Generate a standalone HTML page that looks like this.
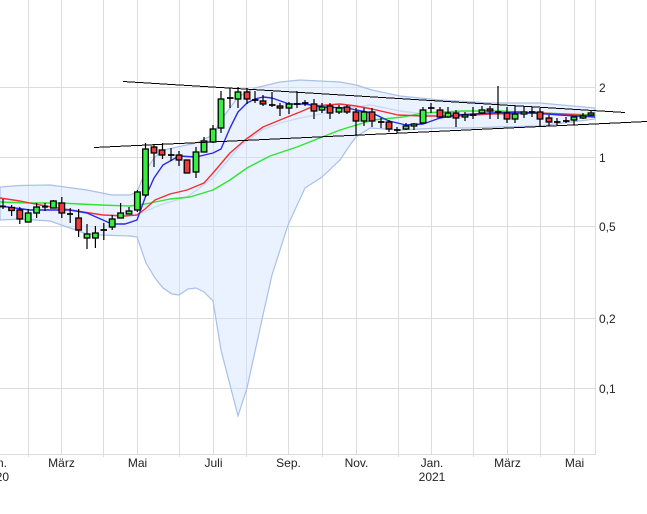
<!DOCTYPE html>
<html lang="de">
<head>
<meta charset="utf-8">
<title>Chart</title>
<style>
html,body{margin:0;padding:0;background:#fff;width:647px;height:514px;overflow:hidden}
svg{display:block}
text{font-family:"Liberation Sans",sans-serif;font-size:12px;fill:#222}
.grid{stroke:#dcdcdc;stroke-width:1;fill:none;shape-rendering:crispEdges}
.trend{stroke:#000;stroke-width:1;fill:none;shape-rendering:crispEdges}
.ma{fill:none;stroke-width:1.4;stroke-linejoin:round}
.c rect{stroke:#000;stroke-width:1.3}
.g rect{fill:#36ee40}
.r rect{fill:#ee3a3a}
.d{fill:none;stroke:#000;stroke-width:1.8}
</style>
</head>
<body>
<svg width="647" height="514" viewBox="0 0 647 514" xmlns="http://www.w3.org/2000/svg">
<path class="grid" d="M28.5 0V457M61.5 0V455M103.5 0V457M137.5 0V455M179.5 0V457M213.5 0V455M246.5 0V457M288.5 0V455M322.5 0V457M356.5 0V455M398.5 0V457M431.5 0V455M473.5 0V457M507.5 0V455M540.5 0V457M574.5 0V455M595.5 0V455M0 87.5H595M0 157.5H595M0 226.5H595M0 318.5H595M0 388.5H595M0 454.5H595"/>
<path d="M0 187L20 185.5L50 185L87 190L112 195L130 195L137 192L145 172L154 158L163 150L196 143L213 135L221 120L238 97L255 88L280 82L300 80L340 82L356 85L372 90L400 96L440 100L490 103L540 103L595 108L595 119L540 126L500 127L470 128L440 128L400 130L370 128L356 137L350 145L340 160L322 177L305 188L288 225L272 275L263 315L247 388L238 416L221 350L213 301L204 292L196 288L188 289L179 295L172 294L163 288L155 278L146 263L137 237L130 236L100 235L87 234L50 221L20 219L0 220Z" fill="#d0e0ff" fill-opacity=".45" stroke="#a9c0ea" stroke-width="1.2"/>
<polyline class="ma" stroke="#c8daf7" points="137,215 160,205 187,197 213,178 240,146 262,130 280,123 300,118 340,110 370,105 400,111 440,116 490,114 540,113 595,116"/>
<polyline class="ma" stroke="#2ee62e" points="0,202 30,203 60,203 100,205 130,206 145,204 170,199 190,197 213,190 230,180 247,168 270,156 297,147 340,130 373,120 403,117 423,113 463,111 500,111 540,113 595,115"/>
<polyline class="ma" stroke="#f03030" points="0,198 20,201 40,205 70,210 103,215 125,216 137,215 145,209 155,200 170,194 187,190 204,183 213,173 230,153 245,140 263,127 280,120 300,112 314,106 340,104 356,106 372,109 398,115 423,116 456,116 490,114 540,113 595,116"/>
<polyline class="ma" stroke="#2a2ae8" points="0,206 30,210 70,210 87,213 112,224 125,224 137,220 145,198 154,178 163,165 179,156 196,157 213,153 221,149 230,128 238,112 247,103 255,99 263,97 272,98 289,104 305,104 322,107 347,108 356,110 372,113 389,121 406,125 423,124 440,118 456,115 490,113 520,112 560,115 595,117"/>
<path stroke="#000" stroke-width="1.2" fill="none" d="M3 199V209M11.6 205V216M19.8 207V224M28.2 209V222M36.6 203V218M45 203V211M53.4 200V208M61.8 197V218M70.2 208V223M78.6 209V237M87 224V249M95.4 226V248M103.8 223V240M112.2 215V230M120.6 203V218M129 207V214M137.4 190V212M145.5 143V197M154 144V167M162.5 143V159M171 148V161M179 151V166M196 147V178M204 137V152M213 125V143M221 91V133M230 88V108M238 87V108M247 88V104M255 91V103M263 95V106M272 92V107M280 103V116M289 102V114M297 91V108M305 100V106M314 99V119M322 103V113M330 103V119M339 105V114M347 105V114M356 108V136M364 108V126M372 108V127M381 118V128M389 120V132M397 127V133M406 123V130M414 123V130M423 107V123M431 103V113M440 107V118M448 107V118M456 110V127M465 112V121M473 107V119M482 106V114M490 106V119M498 86V119M507 107V123M515 106V123M524 106V118M532 107V117M540 108V126M549 115V126M557 118V125M566 117V123M574 117V125M583 113V119M591 111V116"/>
<path class="d" d="M0 206.5H6M42 206.7H48M67 214H73M100.5 230H107M168 155H174.5M227 98H233.5M252 100H258.5M269 105H275.5M294 104H300.5M302 103H308.5M378 122H384.5M394 130H400.5M428 108H434.5M470 115H476.5M495 112H501.5M529 112H535.5M554 122H560.5M563 121H569.5"/>
<g class="c g">
<rect x="25.4" y="213" width="5.6" height="9"/>
<rect x="33.8" y="207" width="5.6" height="6"/>
<rect x="50.6" y="201" width="5.6" height="7"/>
<rect x="84.2" y="234" width="5.6" height="4"/>
<rect x="92.6" y="233" width="5.6" height="5"/>
<rect x="109.4" y="219" width="5.6" height="8"/>
<rect x="117.8" y="213" width="5.6" height="5"/>
<rect x="126.2" y="211" width="5.6" height="3"/>
<rect x="134.6" y="192" width="5.6" height="18"/>
<rect x="142.7" y="149" width="5.6" height="46"/>
<rect x="193.2" y="152" width="5.6" height="20"/>
<rect x="201.2" y="141" width="5.6" height="11"/>
<rect x="210.2" y="129" width="5.6" height="13"/>
<rect x="218.2" y="99" width="5.6" height="29"/>
<rect x="235.2" y="92" width="5.6" height="7"/>
<rect x="286.2" y="104" width="5.6" height="4"/>
<rect x="319.2" y="107" width="5.6" height="3"/>
<rect x="336.2" y="108" width="5.6" height="4"/>
<rect x="361.2" y="112" width="5.6" height="9"/>
<rect x="403.2" y="126" width="5.6" height="3"/>
<rect x="411.2" y="124" width="5.6" height="2"/>
<rect x="420.2" y="110" width="5.6" height="13"/>
<rect x="445.2" y="113" width="5.6" height="4"/>
<rect x="462.2" y="115" width="5.6" height="2"/>
<rect x="479.2" y="110" width="5.6" height="3"/>
<rect x="512.2" y="114" width="5.6" height="5"/>
<rect x="521.2" y="112" width="5.6" height="2"/>
<rect x="571.2" y="117" width="5.6" height="3"/>
<rect x="580.2" y="116" width="5.6" height="2"/>
<rect x="588.2" y="113" width="5.6" height="2"/>
</g>
<g class="c r">
<rect x="8.8" y="207.5" width="5.6" height="3"/>
<rect x="17" y="210" width="5.6" height="9"/>
<rect x="59" y="203" width="5.6" height="10"/>
<rect x="75.8" y="218" width="5.6" height="12"/>
<rect x="151.2" y="147" width="5.6" height="6"/>
<rect x="159.2" y="150" width="5.6" height="5"/>
<rect x="176.2" y="155" width="5.6" height="5"/>
<rect x="184.2" y="160" width="5.6" height="13"/>
<rect x="244.2" y="92" width="5.6" height="7"/>
<rect x="260.2" y="101" width="5.6" height="3"/>
<rect x="277.2" y="106" width="5.6" height="2"/>
<rect x="311.2" y="104" width="5.6" height="7"/>
<rect x="327.2" y="106" width="5.6" height="7"/>
<rect x="344.2" y="107" width="5.6" height="5"/>
<rect x="353.2" y="112" width="5.6" height="9"/>
<rect x="369.2" y="112" width="5.6" height="9"/>
<rect x="386.2" y="122" width="5.6" height="7"/>
<rect x="437.2" y="110" width="5.6" height="7"/>
<rect x="453.2" y="113" width="5.6" height="5"/>
<rect x="487.2" y="109" width="5.6" height="2"/>
<rect x="504.2" y="113" width="5.6" height="6"/>
<rect x="537.2" y="112" width="5.6" height="7"/>
<rect x="546.2" y="118" width="5.6" height="4"/>
</g>
<line class="trend" x1="123" y1="81.5" x2="625" y2="112.5"/>
<line class="trend" x1="94" y1="147.5" x2="647" y2="121.5"/>
<text x="599" y="92">2</text>
<text x="599" y="162">1</text>
<text x="599" y="231">0,5</text>
<text x="599" y="323">0,2</text>
<text x="599" y="393">0,1</text>
<text x="7" y="467" text-anchor="end">n.</text>
<text x="9" y="481" text-anchor="end">20</text>
<text x="61.5" y="467" text-anchor="middle">März</text>
<text x="137.5" y="467" text-anchor="middle">Mai</text>
<text x="213.5" y="467" text-anchor="middle">Juli</text>
<text x="288.5" y="467" text-anchor="middle">Sep.</text>
<text x="356.5" y="467" text-anchor="middle">Nov.</text>
<text x="432" y="467" text-anchor="middle">Jan.</text>
<text x="432" y="481" text-anchor="middle">2021</text>
<text x="507.5" y="467" text-anchor="middle">März</text>
<text x="574.5" y="467" text-anchor="middle">Mai</text>
</svg>
</body>
</html>
